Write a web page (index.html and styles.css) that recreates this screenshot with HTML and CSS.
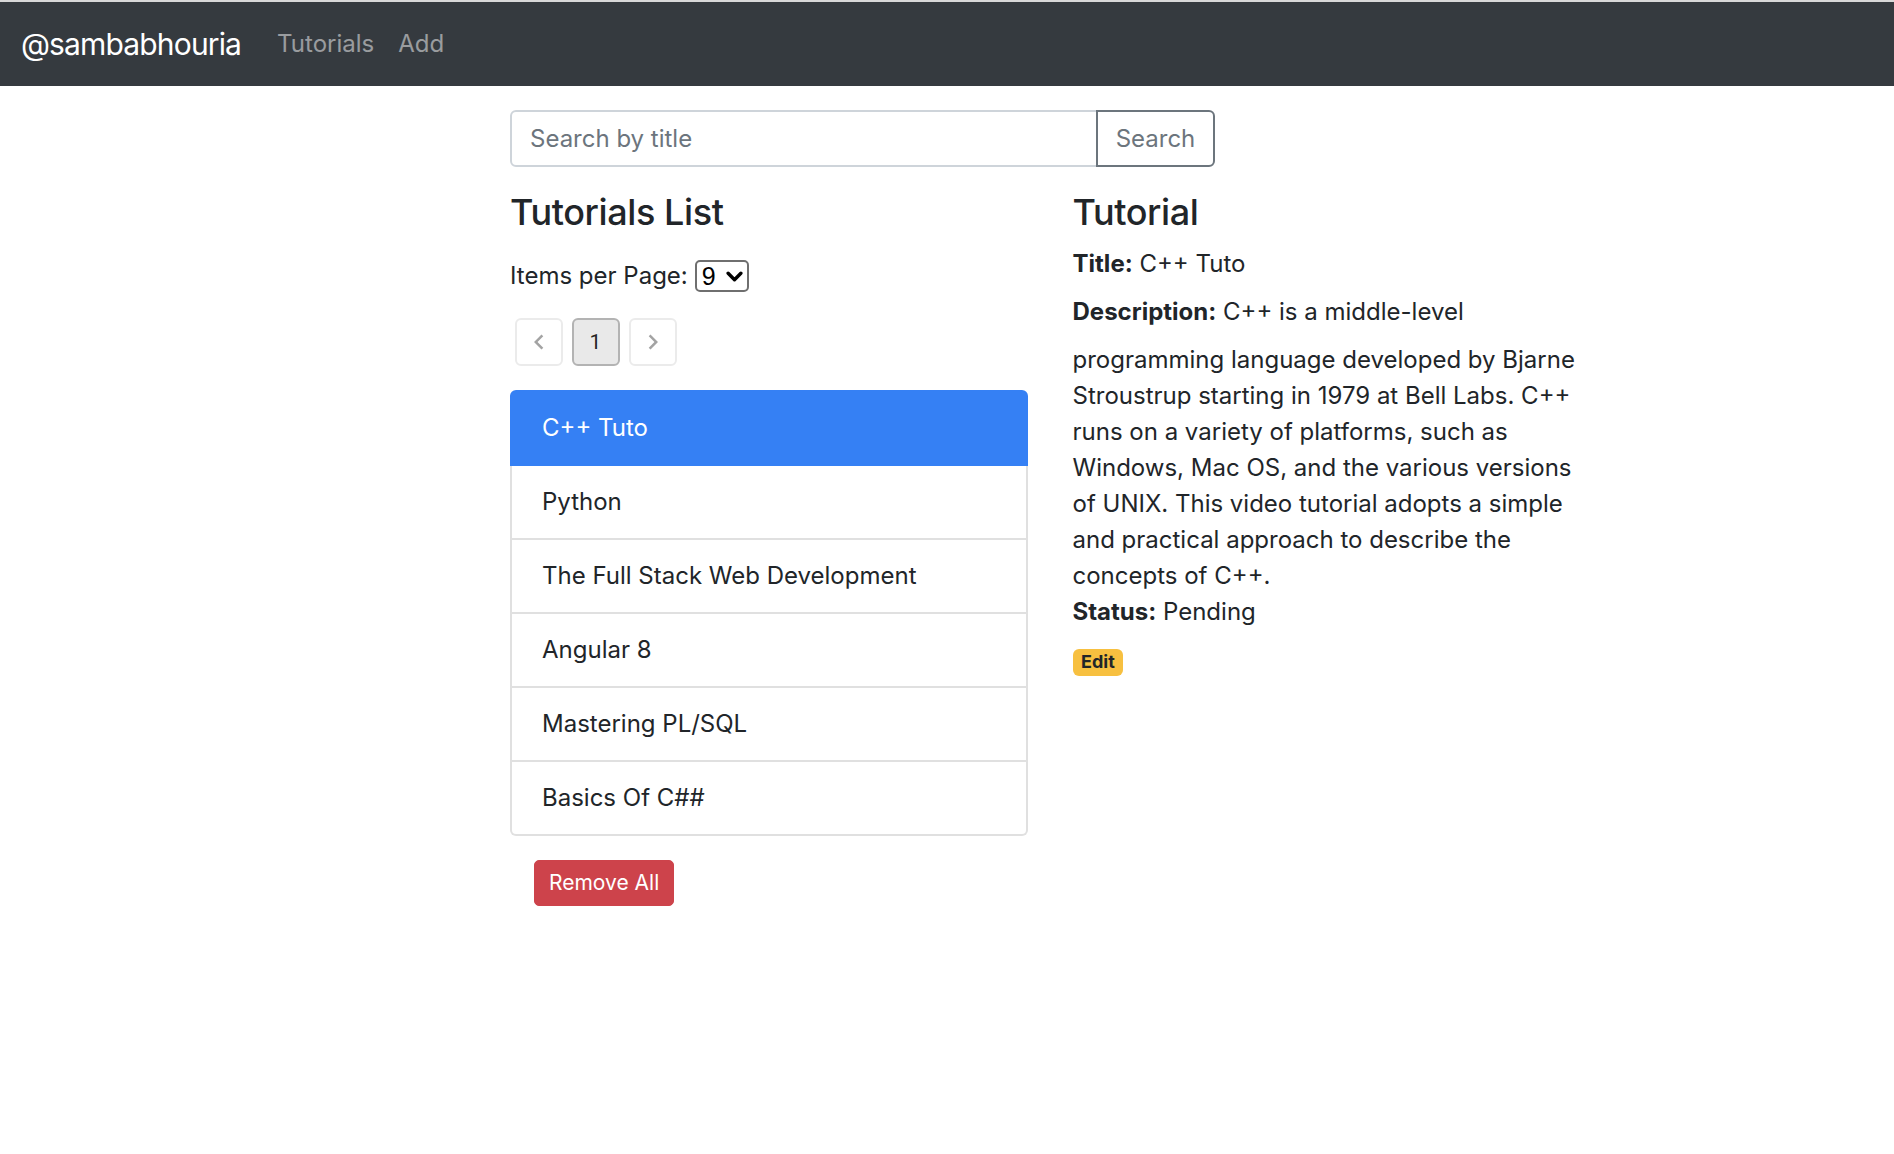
FILE: index.html
```html
<!DOCTYPE html>
<html lang="en">
<head>
<meta charset="utf-8">
<title>Tutorials</title>
<link rel="stylesheet" href="styles.css">
</head>
<body>
<div class="topstrip"></div>
<nav class="navbar">
  <a class="brand" href="#">@sambabhouria</a>
  <ul class="nav">
    <li><a class="nav-link" href="#">Tutorials</a></li>
    <li><a class="nav-link" href="#">Add</a></li>
  </ul>
</nav>
<main class="container">
  <div class="list">
    <div class="col-search">
      <div class="input-group">
        <input class="form-control" type="text" placeholder="Search by title">
        <button class="btn-search" type="button">Search</button>
      </div>
    </div>

    <div class="col">
      <h4>Tutorials List</h4>
      <div class="controls">
        <div class="perpage">
          <span>Items per Page:</span>
          <span class="select-wrap">
            <select class="select">
              <option>3</option>
              <option>6</option>
              <option selected>9</option>
            </select>
            <svg class="select-arrow" viewBox="0 0 16 10" width="17" height="11" aria-hidden="true"><path d="M2 2 L8 8 L14 2" fill="none" stroke="#000" stroke-width="3.2" stroke-linecap="round" stroke-linejoin="round"/></svg>
          </span>
        </div>
        <ul class="pagination">
          <li><button class="page-item disabled" type="button" aria-label="previous"><svg viewBox="0 0 24 24" width="30" height="30"><path d="M15.41 7.41L14 6l-6 6 6 6 1.41-1.41L10.83 12z"/></svg></button></li>
          <li><button class="page-item selected" type="button">1</button></li>
          <li><button class="page-item disabled" type="button" aria-label="next"><svg viewBox="0 0 24 24" width="30" height="30"><path d="M10 6L8.59 7.41 13.17 12l-4.58 4.59L10 18l6-6z"/></svg></button></li>
        </ul>
      </div>
      <ul class="list-group">
        <li class="list-group-item active">C++ Tuto</li>
        <li class="list-group-item">Python</li>
        <li class="list-group-item">The Full Stack Web Development</li>
        <li class="list-group-item">Angular 8</li>
        <li class="list-group-item">Mastering PL/SQL</li>
        <li class="list-group-item">Basics Of C##</li>
      </ul>
      <button class="btn-danger" type="button">Remove All</button>
    </div>

    <div class="col">
      <h4>Tutorial</h4>
      <div class="field"><label><strong>Title:</strong></label> C++ Tuto</div>
      <div class="field"><label><strong>Description:</strong></label> C++ is a middle-level programming language developed by Bjarne Stroustrup starting in 1979 at Bell Labs. C++ runs on a variety of platforms, such as Windows, Mac OS, and the various versions of UNIX. This video tutorial adopts a simple and practical approach to describe the concepts of C++.</div>
      <div class="field"><label><strong>Status:</strong></label> Pending</div>
      <a class="badge" href="#">Edit</a>
    </div>
  </div>
</main>
</body>
</html>
```
FILE: styles.css
```css
* { box-sizing: border-box; }
html, body { margin: 0; padding: 0; }
body {
  font-family: Inter, "Noto Sans", "Liberation Sans", sans-serif;
  font-size: 24px;
  line-height: 1.5;
  color: #212529;
  background: #fff;
}
.topstrip { height: 2px; background: #d8d8d8; }

.navbar {
  display: flex;
  align-items: center;
  height: 84px;
  padding: 12px 21px;
  background: #353a3f;
}
.brand {
  font-size: 30px;
  line-height: 45px;
  letter-spacing: -0.85px;
  padding: 7.5px 0;
  margin-right: 24px;
  color: #fff;
  text-decoration: none;
}
.nav { display: flex; list-style: none; margin: 0; padding: 0; }
.nav-link {
  display: block;
  padding: 12px;
  color: rgba(255, 255, 255, 0.5);
  text-decoration: none;
  line-height: 36px;
}

.container { padding-top: 24px; }
.list {
  display: flex;
  flex-wrap: wrap;
  column-gap: 45px;
  width: 1080px;
  margin-left: 510px;
}
.col-search { width: 705px; flex: 0 0 705px; }
.col { flex: 0 0 517.5px; width: 517.5px; }

.input-group { display: flex; margin-bottom: 24px; }
.form-control {
  flex: 1;
  min-width: 0;
  height: 57px;
  padding: 9px 18px;
  font: inherit;
  color: #495057;
  border: 2px solid #ced4da;
  border-radius: 6px 0 0 6px;
  outline: none;
}
.form-control::placeholder { color: #6c757d; }
.btn-search {
  flex: 0 0 119px;
  height: 57px;
  margin-left: -2px;
  padding: 9px 0;
  font: inherit;
  color: #6c757d;
  background: #fff;
  border: 2px solid #6c757d;
  border-radius: 0 6px 6px 0;
}

h4 {
  margin: 0 0 12px;
  font-size: 36px;
  font-weight: 500;
  line-height: 1.2;
  letter-spacing: -0.4px;
}

.controls { margin-top: 24px; }
.perpage { display: flex; align-items: center; height: 36px; gap: 7px; }
.select-wrap { position: relative; display: inline-flex; }
.select {
  appearance: none;
  -webkit-appearance: none;
  width: 54px;
  height: 32px;
  padding: 0 0 0 5px;
  font-family: "Liberation Sans", Arial, sans-serif;
  font-size: 25px;
  line-height: 28px;
  color: #000;
  background: #fff;
  border: 2px solid #6f6f6f;
  border-radius: 5px;
}
.select-arrow {
  position: absolute;
  right: 6px;
  top: 11px;
  pointer-events: none;
}

.pagination {
  display: flex;
  list-style: none;
  margin: 24px 0;
  padding: 0;
}
.page-item {
  display: flex;
  align-items: center;
  justify-content: center;
  width: 48px;
  height: 48px;
  margin: 0 4.5px;
  padding: 0;
  font-family: Roboto, "Liberation Sans", sans-serif;
  font-size: 21px;
  color: rgba(0, 0, 0, 0.87);
  background: #fff;
  border: 2px solid #ebebeb;
  border-radius: 6px;
}
.page-item svg { fill: #a3a3a3; }
.page-item.selected { background: #e9e9e9; border-color: #b3b3b3; }

.list-group { list-style: none; margin: 0; padding: 0; }
.list-group-item {
  padding: 18px 30px;
  line-height: 36px;
  border: 2px solid #e0e0e0;
  border-top-width: 0;
  background: #fff;
}
.list-group-item:first-child { border-top-width: 2px; border-radius: 6px 6px 0 0; }
.list-group-item:last-child { border-radius: 0 0 6px 6px; }
.list-group-item.active { background: #3580f4; border-color: #3580f4; color: #fff; }

.btn-danger {
  margin: 24px;
  padding: 6px 14px;
  font: inherit;
  font-size: 21px;
  line-height: 31.5px;
  color: #fff;
  background: #cd434b;
  border: 1px solid #cd434b;
  border-radius: 5px;
}

label { display: inline-block; margin-bottom: 12px; }
strong { font-weight: 700; }

.badge {
  display: inline-block;
  padding: 4.5px 8.5px;
  font-size: 18px;
  font-weight: 700;
  line-height: 1;
  color: #212529;
  background: #f7c040;
  border-radius: 6px;
  text-decoration: none;
}
```
